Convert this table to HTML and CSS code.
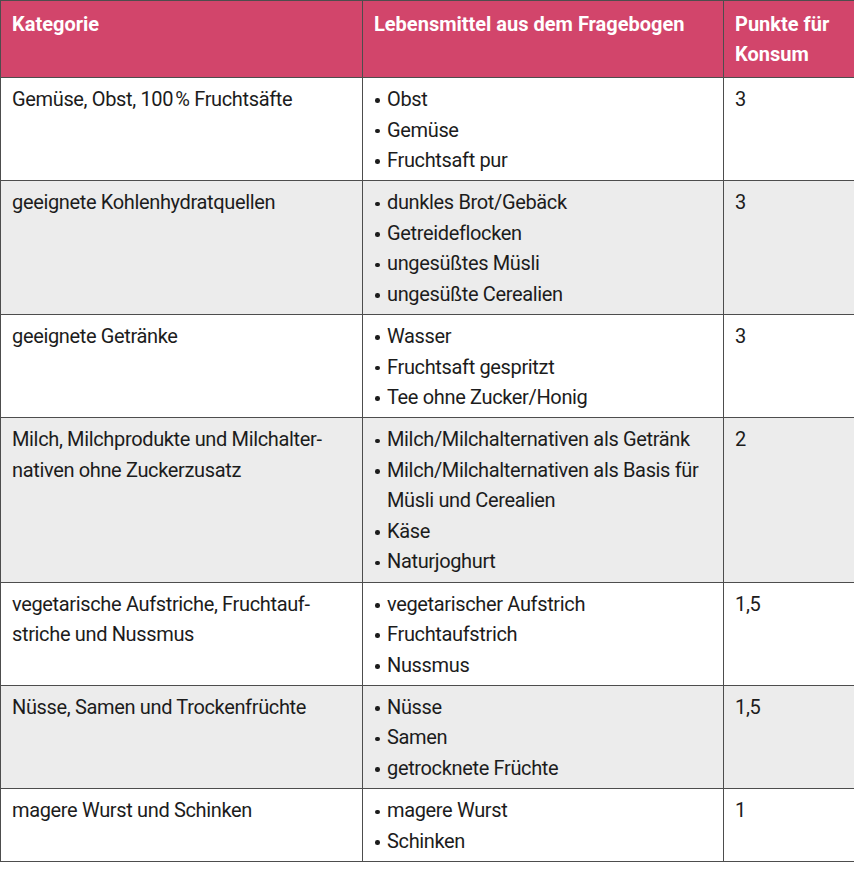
FILE: index.html
```html
<!DOCTYPE html>
<html lang="de">
<head>
<meta charset="utf-8">
<title>Kategorien</title>
<link rel="stylesheet" href="styles.css">
</head>
<body>
<table class="tbl">
  <colgroup>
    <col class="c1"><col class="c2"><col class="c3">
  </colgroup>
  <thead>
    <tr>
      <th>Kategorie</th>
      <th>Lebensmittel aus dem Fragebogen</th>
      <th>Punkte für<br>Konsum</th>
    </tr>
  </thead>
  <tbody>
    <tr>
      <td>Gemüse, Obst, 100&#8239;% Fruchtsäfte</td>
      <td><ul class="items"><li>Obst</li><li>Gemüse</li><li>Fruchtsaft pur</li></ul></td>
      <td>3</td>
    </tr>
    <tr class="alt">
      <td>geeignete Kohlenhydratquellen</td>
      <td><ul class="items"><li>dunkles Brot/Gebäck</li><li>Getreideflocken</li><li>ungesüßtes Müsli</li><li>ungesüßte Cerealien</li></ul></td>
      <td>3</td>
    </tr>
    <tr>
      <td>geeignete Getränke</td>
      <td><ul class="items"><li>Wasser</li><li>Fruchtsaft gespritzt</li><li>Tee ohne Zucker/Honig</li></ul></td>
      <td>3</td>
    </tr>
    <tr class="alt">
      <td>Milch, Milchprodukte und Milchalter-<br>nativen ohne Zuckerzusatz</td>
      <td><ul class="items"><li>Milch/Milchalternativen als Getränk</li><li>Milch/Milchalternativen als Basis für<br>Müsli und Cerealien</li><li>Käse</li><li>Naturjoghurt</li></ul></td>
      <td>2</td>
    </tr>
    <tr>
      <td>vegetarische Aufstriche, Fruchtauf-<br>striche und Nussmus</td>
      <td><ul class="items"><li>vegetarischer Aufstrich</li><li>Fruchtaufstrich</li><li>Nussmus</li></ul></td>
      <td>1,5</td>
    </tr>
    <tr class="alt">
      <td>Nüsse, Samen und Trockenfrüchte</td>
      <td><ul class="items"><li>Nüsse</li><li>Samen</li><li>getrocknete Früchte</li></ul></td>
      <td>1,5</td>
    </tr>
    <tr>
      <td>magere Wurst und Schinken</td>
      <td><ul class="items"><li>magere Wurst</li><li>Schinken</li></ul></td>
      <td>1</td>
    </tr>
  </tbody>
</table>
</body>
</html>
```

FILE: styles.css
```css
html, body {
  margin: 0;
  padding: 0;
  background: #ffffff;
}
body {
  font-family: "Roboto", "Noto Sans", sans-serif;
  font-size: 20px;
  line-height: 30.5px;
  color: #1c1c1c;
}
.tbl {
  width: 854px;
  border-collapse: collapse;
  table-layout: fixed;
}
.c1 { width: 362px; }
.c2 { width: 361px; }
.c3 { width: 131px; }
.tbl th,
.tbl td {
  border: 1px solid #4d4d4d;
  vertical-align: top;
  text-align: left;
  padding: 6px 10px 4.8px 11px;
  white-space: nowrap;
}
.tbl td {
  letter-spacing: -0.35px;
}
.tbl th {
  background: #d2456b;
  color: #ffffff;
  font-weight: 700;
  padding-top: 7.5px;
  padding-bottom: 7.5px;
}
.tbl tr.alt td {
  background: #ececec;
}
.items {
  list-style: none;
  margin: 0;
  padding: 0;
}
.items li {
  position: relative;
  padding-left: 13px;
}
.items li::before {
  content: "";
  position: absolute;
  left: 1px;
  top: 14.3px;
  width: 4.6px;
  height: 4.6px;
  border-radius: 50%;
  background: #1c1c1c;
}
```
